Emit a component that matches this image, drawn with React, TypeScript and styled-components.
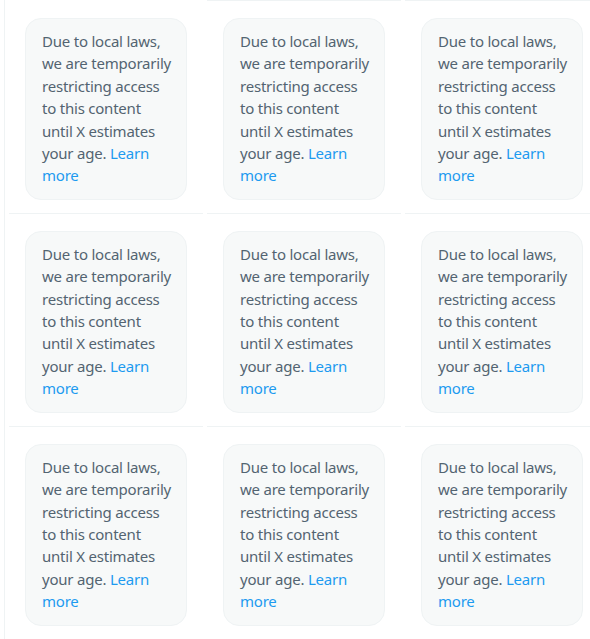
import React from 'react';
import styled, { createGlobalStyle } from 'styled-components';

const GlobalStyle = createGlobalStyle`
  html, body {
    margin: 0;
    background: #ffffff;
    overflow: hidden;
  }
`;

const Grid = styled.div`
  display: grid;
  grid-template-columns: repeat(3, 194px);
  column-gap: 4px;
  margin-left: 4px;
  padding-left: 4px;
  border-left: 1px solid #eff3f4;
  width: max-content;
  min-height: 639px;
`;

const Cell = styled.div<{ $top?: 'line' | 'blank' }>`
  box-sizing: border-box;
  padding: 17px 16px 13px;
  border-bottom: 1px solid #eff3f4;
  border-top: ${({ $top }) => ($top === 'line' ? '1px solid #eff3f4' : $top === 'blank' ? '1px solid transparent' : 'none')};
`;

const Notice = styled.div`
  box-sizing: border-box;
  width: 162px;
  padding: 11px 16px 12px;
  background: #f7f9f9;
  border: 1px solid #eff3f4;
  border-radius: 16px;
  font-family: "Noto Sans", "Open Sans", sans-serif;
  font-size: 15px;
  letter-spacing: -0.22px;
  line-height: 22.4px;
  color: #536471;
  white-space: nowrap;
`;

const Learn = styled.a`
  color: #1d9bf0;
  text-decoration: none;
`;

function AgeNotice (): React.ReactElement {
  return (
    <Notice>
      Due to local laws,<br />
      we are temporarily<br />
      restricting access<br />
      to this content<br />
      until X estimates<br />
      your age. <Learn href='#'>Learn<br />more</Learn>
    </Notice>
  );
}

export default function App (): React.ReactElement {
  const cells = Array.from({ length: 9 }, (_, i) => i);

  return (
    <>
      <GlobalStyle />
      <Grid>
        {cells.map((i) => (
          <Cell
            $top={i === 0 ? 'blank' : i < 3 ? 'line' : undefined}
            key={i}
          >
            <AgeNotice />
          </Cell>
        ))}
      </Grid>
    </>
  );
}
